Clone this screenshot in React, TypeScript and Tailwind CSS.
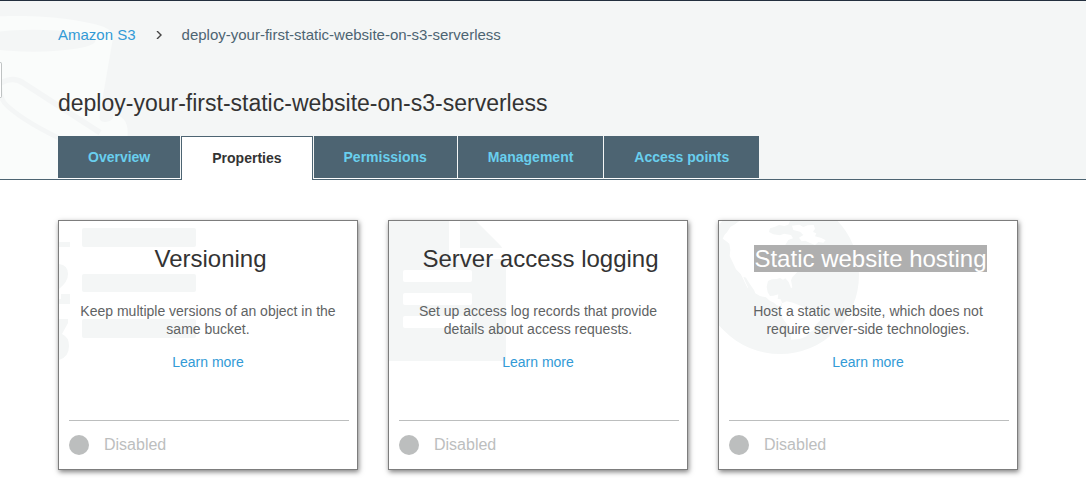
import type { ReactNode } from "react";

const tabs = ["Overview", "Properties", "Permissions", "Management", "Access points"];

const BucketArt = () => (
  <svg className="absolute left-0 top-0 h-[178px] w-[130px]" viewBox="0 3 390 534" aria-hidden="true">
    <path
      d="M0 49C60 46 150 48 220 60C290 71 340 84 340 108L299 345Q294 368 318 366Q345 362 339 343Q382 348 383 395V415L340 440L174 537H0Z"
      fill="#fafcfb"
    />
    <ellipse cx="100" cy="122" rx="186" ry="33" fill="#f4f6f6" />
    <path d="M0 250Q40 228 68 248L300 398" fill="none" stroke="#f4f6f6" strokeWidth="17" />
    <path d="M0 262Q0 300 22 318Q80 370 200 425" fill="none" stroke="#f4f6f6" strokeWidth="14" />
  </svg>
);

const ListArt = () => (
  <svg className="absolute left-0 top-0 h-[140px] w-[140px]" viewBox="0 0 140 140" fill="#f4f6f6" aria-hidden="true">
    <rect x="23" y="7" width="114" height="19" rx="2" />
    <rect x="23" y="53" width="114" height="18" rx="2" />
    <rect x="23" y="98" width="114" height="19" rx="2" />
    <rect x="0" y="21" width="11" height="5" />
    <path d="M0 43Q9 44 9 53Q9 61 0 68Z" />
    <path d="M0 78H2V73H11V83H0Z" />
    <path d="M0 98H9V102L3 113Q10 116 10 125Q10 136 0 139Z" />
  </svg>
);

const DocumentArt = () => (
  <svg className="absolute left-0 top-0 h-[140px] w-[140px]" viewBox="0 0 140 140" aria-hidden="true">
    <path d="M0 0H60V38H117V137Q117 140 114 140H0Z" fill="#f4f6f6" />
    <path d="M71 0H87L109 22Q113 26 113 27H71Z" fill="#f4f6f6" />
    <g fill="#fff">
      <rect x="14" y="49" width="69" height="12" rx="2" />
      <rect x="14" y="72" width="69" height="12" rx="2" />
      <rect x="14" y="95" width="69" height="12" rx="2" />
    </g>
  </svg>
);

const GlobeArt = () => (
  <svg className="absolute left-0 top-0 h-[134px] w-[140px]" viewBox="27 33 420 402" aria-hidden="true">
    <circle cx="210" cy="195" r="237" fill="#f4f6f6" />
    <g fill="#fff">
      <path d="M88 33L75 43L62 50L52 65L43 76L38 86L48 93L58 101L61 120L59 138L68 157L78 178L92 192L101 210L113 235L114 232L105 213L100 200L108 203L118 220L132 240L136 250L150 258L168 262L179 272L192 278L200 286L210 289L216 278L212 268L203 267L205 253L191 257L180 258L173 247L170 230L174 213L185 208L200 207L210 204L219 209L226 205L236 216L243 235L247 232L243 211L247 202L260 188L267 172L280 158L291 150L310 145L322 134L311 122L300 112L286 104L276 112L265 122L256 132L249 124L233 117L226 104L235 90L249 85L243 75L222 71L210 76L190 73L177 66L180 55L195 50L207 45L223 48L235 44L240 33Z" />
      <path d="M246 47L268 44L280 51L293 46L311 45L315 56L309 66L319 70L315 79L334 84L347 91L340 98L325 96L315 105L300 99L286 92L275 94L267 83L280 75L270 65L250 60Z" />
      <path d="M216 280L230 274L249 278L264 284L280 291L292 304L316 311L333 318L330 332L318 344L313 359L300 367L290 379L277 384L268 387L243 389L242 375L246 364L232 344L218 325L211 308Z" />
    </g>
  </svg>
);

type CardProps = {
  title: string;
  description: string;
  selected?: boolean;
  art: ReactNode;
};

const cards: CardProps[] = [
  {
    title: "Versioning",
    description: "Keep multiple versions of an object in the same bucket.",
    art: <ListArt />,
  },
  {
    title: "Server access logging",
    description: "Set up access log records that provide details about access requests.",
    art: <DocumentArt />,
  },
  {
    title: "Static website hosting",
    description: "Host a static website, which does not require server-side technologies.",
    selected: true,
    art: <GlobeArt />,
  },
];

function PropertyCard({ title, description, selected, art }: CardProps) {
  return (
    <article className="relative flex min-h-[250px] w-[300px] flex-col border border-[#7d7d7d] bg-white shadow-[1px_2px_5px_rgba(0,0,0,0.5)]">
      {art}
      <div className="relative px-5 pt-6 text-center">
        <h2 className="pl-[5px] text-2xl leading-7 text-[#333]">
          <span className={selected ? "bg-[#afafaf] text-white" : ""}>{title}</span>
        </h2>
        <p className="mt-[29px] text-sm leading-[18px] text-[#5f6364]">{description}</p>
        <a href="#" className="mt-[15px] inline-block text-sm leading-[18px] text-[#329ad6]">
          Learn more
        </a>
      </div>
      <div className="relative ml-2.5 mr-2 mt-auto flex h-[49px] items-center gap-[15px] border-t border-[#bcbebe]">
        <span className="size-5 rounded-full bg-[#bcbebe]" />
        <span className="text-base text-[#bcbebe]">Disabled</span>
      </div>
    </article>
  );
}

export default function App() {
  return (
    <div className="bg-white font-['Liberation_Sans',Arial,sans-serif]">
      <header className="relative border-b border-t border-b-[#4d6472] border-t-[#232f3e] bg-[#f4f6f6]">
        <BucketArt />
        <button
          type="button"
          aria-label="Open navigation"
          className="absolute left-0 top-[61px] h-9 w-[2px] rounded-r border border-l-0 border-[#bfc3c3] bg-white"
        />
        <div className="relative px-[58px] pt-6">
          <nav aria-label="Breadcrumb" className="flex items-center text-[15px] leading-5">
            <a href="#" className="text-[#329ad6]">
              Amazon S3
            </a>
            <svg className="mx-[19px] size-2" viewBox="0 0 8 8" fill="none" stroke="#444" strokeWidth="1.4" aria-hidden="true">
              <path d="M2 0L6 4L2 8" />
            </svg>
            <span className="text-[#4d6472]">deploy-your-first-static-website-on-s3-serverless</span>
          </nav>
          <h1 className="mt-11 text-[23px] leading-7 text-[#333]">
            deploy-your-first-static-website-on-s3-serverless
          </h1>
          <div role="tablist" className="-mb-px mt-[19px] flex items-start gap-px text-sm font-bold">
            {tabs.map((tab) => (
              <button
                key={tab}
                type="button"
                role="tab"
                aria-selected={tab === "Properties"}
                className={
                  tab === "Properties"
                    ? "h-11 border border-b-0 border-[#4d6472] bg-white px-[30px] pb-0.5 text-[#333]"
                    : "h-[43px] border-b border-white bg-[#4d6472] px-[30px] text-[#69cfee]"
                }
              >
                {tab}
              </button>
            ))}
          </div>
        </div>
      </header>
      <main className="flex flex-wrap gap-[30px] px-[58px] pb-2 pt-10">
        {cards.map((card) => (
          <PropertyCard key={card.title} {...card} />
        ))}
      </main>
    </div>
  );
}
